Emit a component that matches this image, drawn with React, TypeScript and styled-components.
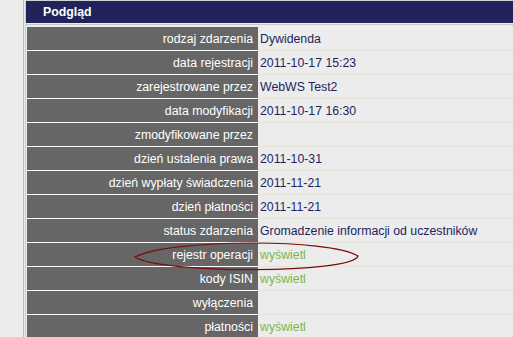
import React from "react";
import styled, { createGlobalStyle } from "styled-components";

const GlobalStyle = createGlobalStyle`
  html, body {
    margin: 0;
    padding: 0;
    background: #ececec;
    overflow: hidden;
  }
  body {
    font-family: "Liberation Sans", Arial, sans-serif;
    font-size: 12.3px;
  }
`;

type Row = {
  label: string;
  value?: string;
  link?: boolean;
};

const rows: Row[] = [
  { label: "rodzaj zdarzenia", value: "Dywidenda" },
  { label: "data rejestracji", value: "2011-10-17 15:23" },
  { label: "zarejestrowane przez", value: "WebWS Test2" },
  { label: "data modyfikacji", value: "2011-10-17 16:30" },
  { label: "zmodyfikowane przez" },
  { label: "dzień ustalenia prawa", value: "2011-10-31" },
  { label: "dzień wypłaty świadczenia", value: "2011-11-21" },
  { label: "dzień płatności", value: "2011-11-21" },
  { label: "status zdarzenia", value: "Gromadzenie informacji od uczestników" },
  { label: "rejestr operacji", value: "wyświetl", link: true },
  { label: "kody ISIN", value: "wyświetl", link: true },
  { label: "wyłączenia" },
  { label: "płatności", value: "wyświetl", link: true }
];

const Page = styled.div`
  position: relative;
  height: 337px;
`;

const Frame = styled.div`
  margin-left: 23px;
  height: 100%;
  border-left: 1px solid #bcbcbc;
  padding-left: 1px;
`;

const Panel = styled.div`
  border-top: 1px solid #d2d2d2;
  border-left: 1px solid #cdcdcd;
`;

const PanelHeader = styled.div`
  height: 21px;
  padding: 1px 0 0 17px;
  background: #21245a;
  color: #ffffff;
  font-weight: bold;
  line-height: 21px;
`;

const DetailsTable = styled.div`
  margin-top: 1px;
  border-top: 1px solid #c6c6c6;
  padding: 2px 0 0 1px;
`;

const DetailsRow = styled.div`
  display: grid;
  grid-template-columns: 231px 1fr;
`;

const Cell = styled.div`
  height: 21px;
  padding-top: 2px;
  line-height: 21px;
  white-space: nowrap;
  overflow: hidden;
`;

const LabelCell = styled(Cell)`
  background: #666666;
  color: #ffffff;
  text-align: right;
  padding-right: 5px;
  border-bottom: 1px solid #ffffff;
`;

const ValueCell = styled(Cell)<{ $link?: boolean }>`
  padding-left: 2px;
  color: ${({ $link }) => ($link ? "#7fb548" : "#241f5c")};
  border-bottom: 1px solid #e4e4d6;
`;

const Highlight = styled.svg`
  position: absolute;
  left: 130px;
  top: 236px;
  width: 235px;
  height: 44px;
  pointer-events: none;
`;

export default function App() {
  return (
    <Page>
      <GlobalStyle />
      <Frame>
        <Panel>
          <PanelHeader>Podgląd</PanelHeader>
          <DetailsTable>
            {rows.map((row) => (
              <DetailsRow key={row.label}>
                <LabelCell>{row.label}</LabelCell>
                <ValueCell $link={row.link}>{row.value}</ValueCell>
              </DetailsRow>
            ))}
          </DetailsTable>
        </Panel>
      </Frame>
      {/* hand-drawn mark around "rejestr operacji" */}
      <Highlight viewBox="0 0 235 44">
        <path
          d="M5,21 C40,3 200,2 228,20 C222,38 30,38 5,21 Z"
          fill="none"
          stroke="#7a0c0c"
          strokeWidth="1.2"
        />
      </Highlight>
    </Page>
  );
}
